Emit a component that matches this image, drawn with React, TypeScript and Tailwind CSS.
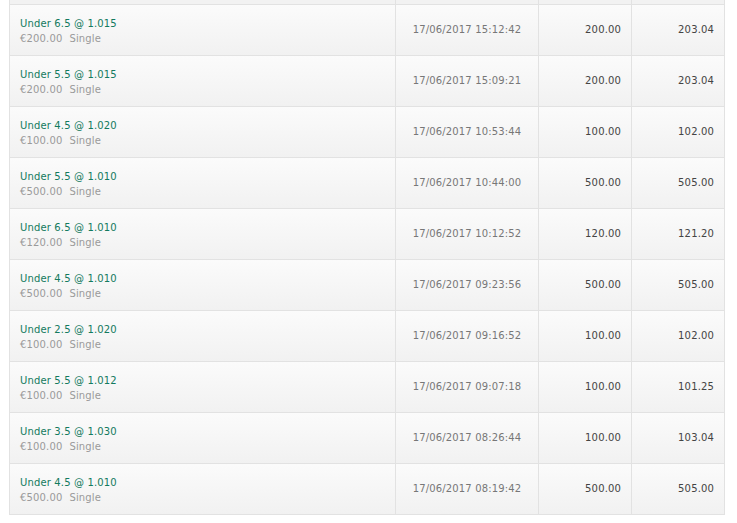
import React from "react";

const rows = [
  ["Under 6.5 @ 1.015", "€200.00", "17/06/2017 15:12:42", "200.00", "203.04"],
  ["Under 5.5 @ 1.015", "€200.00", "17/06/2017 15:09:21", "200.00", "203.04"],
  ["Under 4.5 @ 1.020", "€100.00", "17/06/2017 10:53:44", "100.00", "102.00"],
  ["Under 5.5 @ 1.010", "€500.00", "17/06/2017 10:44:00", "500.00", "505.00"],
  ["Under 6.5 @ 1.010", "€120.00", "17/06/2017 10:12:52", "120.00", "121.20"],
  ["Under 4.5 @ 1.010", "€500.00", "17/06/2017 09:23:56", "500.00", "505.00"],
  ["Under 2.5 @ 1.020", "€100.00", "17/06/2017 09:16:52", "100.00", "102.00"],
  ["Under 5.5 @ 1.012", "€100.00", "17/06/2017 09:07:18", "100.00", "101.25"],
  ["Under 3.5 @ 1.030", "€100.00", "17/06/2017 08:26:44", "100.00", "103.04"],
  ["Under 4.5 @ 1.010", "€500.00", "17/06/2017 08:19:42", "500.00", "505.00"],
];

const grid = "grid grid-cols-[386px_143px_93px_93px]";

export default function App() {
  return (
    <div
      className="w-[737px] h-[523px] bg-white pl-[9px] overflow-hidden"
      style={{ fontFamily: '"DejaVu Sans", Verdana, sans-serif' }}
    >
      <div className="w-[716px] border-l border-[#e2e2e2] text-[10px] tracking-[0.15px]">
        <div className={`${grid} h-[5px]`}>
          <div className="border-r border-b border-[#e2e2e2] bg-[#f2f2f2]" />
          <div className="border-r border-b border-[#e2e2e2] bg-[#f2f2f2]" />
          <div className="border-r border-b border-[#e2e2e2] bg-[#f2f2f2]" />
          <div className="border-r border-b border-[#e2e2e2] bg-[#f2f2f2]" />
        </div>
        {rows.map((r, i) => (
          <div
            key={i}
            className={`${grid} h-[51px] bg-gradient-to-b from-[#fbfbfb] to-[#f1f1f1]`}
          >
            <div className="border-r border-b border-[#e2e2e2] pl-[10px] pt-[11px] leading-[15px]">
              <div className="text-[#137a5e]">{r[0]}</div>
              <div className="text-[#9a9a9a]">
                {r[1]}
                <span className="ml-[7px]">Single</span>
              </div>
            </div>
            <div className="border-r border-b border-[#e2e2e2] flex items-center justify-center text-[#777] pb-[1px]">
              {r[2]}
            </div>
            <div className="border-r border-b border-[#e2e2e2] flex items-center justify-end pr-[10px] text-[#444] pb-[1px]">
              {r[3]}
            </div>
            <div className="border-r border-b border-[#e2e2e2] flex items-center justify-end pr-[10px] text-[#444] pb-[1px]">
              {r[4]}
            </div>
          </div>
        ))}
      </div>
    </div>
  );
}
